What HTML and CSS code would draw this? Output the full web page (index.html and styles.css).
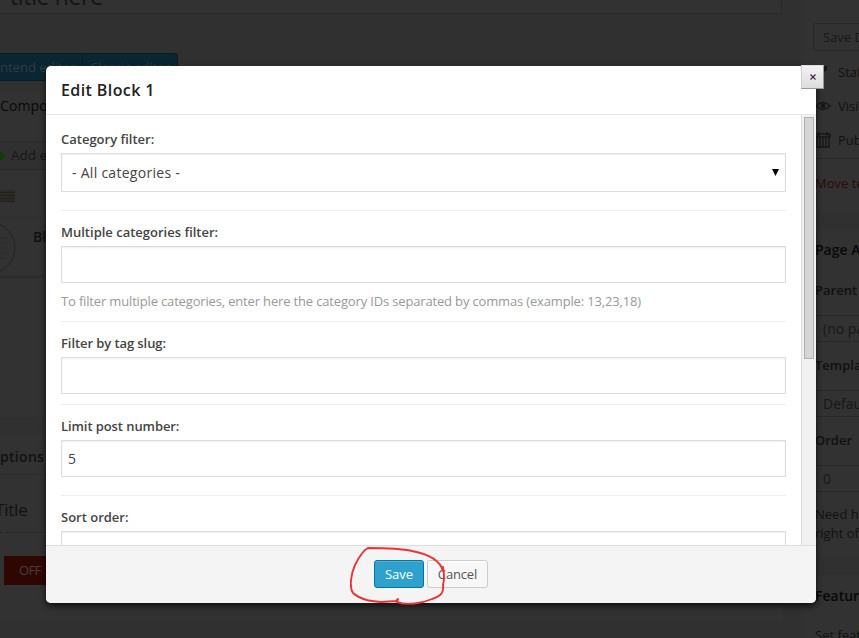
FILE: index.html
```html
<!DOCTYPE html>
<html lang="en">
<head>
<meta charset="utf-8">
<title>Edit Block 1</title>
<link rel="stylesheet" href="styles.css">
</head>
<body>
<div class="page">
  <main class="editor">
    <div class="title-input">title here</div>
    <div class="switcher"><span>ntend editor</span><span class="second">Classic editor</span></div>
    <section class="composer">
      <h3>Compo</h3>
      <div class="toolbar"><svg width="9" height="10" viewBox="0 0 9 10"><path d="M-2 5H5M1 1V9" stroke="#103b09" stroke-width="3"/></svg><span>Add e</span></div>
      <div class="handle"><i></i></div>
      <div class="block"><svg width="33" height="56" viewBox="0 0 33 56"><g fill="none" stroke="#242424"><circle cx="-10" cy="28" r="25"/><path d="M0 18h8M0 23h10M0 28h7M0 33h9M0 38h6" stroke="#292929"/></g></svg><b>Bl</b></div>
      <div class="canvas"></div>
    </section>
    <section class="options">
      <h3>ptions</h3>
      <div class="option-title">Title</div>
      <div class="off">OFF</div>
    </section>
  </main>
  <aside class="side">
    <section class="publish">
      <div class="draft">Save D</div>
      <div class="meta"><svg width="15" height="16" viewBox="0 0 15 16"><path d="M3 2h8v4l-3 2-5 6z" fill="#171717"/></svg>Stat</div>
      <div class="meta"><svg width="15" height="16" viewBox="0 0 15 16"><path d="M0 8Q7 1 14 8Q7 15 0 8Z" fill="none" stroke="#171717" stroke-width="1.2"/><circle cx="7" cy="8" r="2.4" fill="#171717"/></svg>Visi</div>
      <div class="meta"><svg width="15" height="16" viewBox="0 0 15 16"><path d="M0 2h14v3H0zM3 0v4M11 0v4M1 5v10h12V5M4 6v9M7 6v9M10 6v9" fill="none" stroke="#171717" stroke-width="1.4"/></svg>Pub</div>
      <div class="trash">Move to</div>
    </section>
    <section class="attributes">
      <h3>Page A</h3>
      <label class="l-parent">Parent</label>
      <div class="control">(no pa</div>
      <label class="l-template">Templa</label>
      <div class="control">Defau</div>
      <label class="l-order">Order</label>
      <div class="control">0</div>
      <p>Need h<br>right of</p>
    </section>
    <section class="featured">
      <h3>Featur</h3>
      <p>Set feat</p>
    </section>
  </aside>
</div>

<div class="modal">
  <header><h2>Edit Block 1</h2></header>
  <div class="body">
    <form>
      <div class="field f1"><label>Category filter:</label><div class="select"><span>- All categories -</span><svg width="7" height="7" viewBox="0 0 7 7"><path d="M0 0H7L3.5 7Z" fill="#000"/></svg></div></div>
      <div class="field f2"><label>Multiple categories filter:</label><div class="input"></div><small>To filter multiple categories, enter here the category IDs separated by commas (example: 13,23,18)</small></div>
      <div class="field f3"><label>Filter by tag slug:</label><div class="input"></div></div>
      <div class="field f4"><label>Limit post number:</label><div class="input">5</div></div>
      <div class="field f5"><label>Sort order:</label><div class="input"></div></div>
    </form>
    <div class="track"><div class="thumb"></div></div>
  </div>
  <footer><div class="btn save">Save</div><div class="btn cancel">Cancel</div></footer>
  <div class="close"><svg width="6" height="6" viewBox="0 0 6 6"><path d="M.5 .5L5.5 5.5M5.5 .5L.5 5.5" stroke="#461a4c" stroke-width="1.1"/></svg></div>
  <svg class="mark" width="98" height="62" viewBox="0 0 98 62"><path d="M93 25C90 14 78 8 62 5C49 2 32 2 18 2C14 4 9 11 5 19C1 28 -1 41 3 47C11 54 20 55 31 56L46 55L48 53L47 56C57 60 73 57 82 53C91 50 94 47 93 39C95 32 94 27 93 21" fill="none" stroke="#ea3338" stroke-width="1.9" stroke-linecap="round" stroke-linejoin="round"/></svg>
</div>
</body>
</html>
```
FILE: styles.css
```css
* { box-sizing: border-box; }
body {
  margin: 0;
  width: 859px;
  height: 638px;
  overflow: hidden;
  position: relative;
  background: #303030;
  font: 13px/19px "Open Sans", sans-serif;
  color: #111;
}
h2, h3, p { margin: 0; }
svg { display: block; flex: none; }
.page { display: flex; height: 638px; overflow: hidden; white-space: nowrap; }
.editor { width: 782px; flex: none; }
.title-input {
  display: flex;
  align-items: flex-end;
  height: 14px;
  padding: 0 0 1px 10px;
  overflow: hidden;
  line-height: 32px;
  font-size: 23px;
  letter-spacing: -.35px;
  color: #141414;
  background: #323232;
  border: solid #292929;
  border-width: 0 1px 1px 0;
}
.switcher {
  display: flex;
  width: 178px;
  height: 28px;
  margin-top: 39px;
  line-height: 27px;
  background: #0a2633;
  border: 1px solid #071d27;
  border-left: 0;
  border-radius: 0 3px 3px 0;
  color: #343b3e;
}
.switcher span { width: 82px; }
.switcher .second { width: 95px; padding-left: 7px; border-left: 1px solid #071d27; }
.composer { margin-top: 10px; height: 326px; background: #323232; }
h3 { font-size: 14px; font-weight: 600; color: #080808; }
.composer h3 { height: 51px; padding-top: 5px; line-height: 20px; font-weight: 400; letter-spacing: .1px; border-bottom: 1px solid #2b2b2b; }
.toolbar { display: flex; align-items: center; height: 28px; border-bottom: 1px solid #292929; font-size: 13.5px; color: #171717; background: #303030; }
.toolbar span { margin-left: 2px; }
.handle { height: 47px; padding-top: 20px; }
.handle i { display: block; width: 15px; height: 12px; background: repeating-linear-gradient(#2b2a24 0 2px, #22211c 2px 3px); }
.block { display: flex; height: 61px; padding-top: 2px; border: solid #2e2e2e; border-width: 1px 0 3px; font-size: 14px; }
.block b { padding-top: 7px; font-weight: 600; }
.options { margin-top: 19px; height: 200px; background: #323232; height: 184px; }
.options h3 { height: 39px; padding-top: 11px; line-height: 20px; letter-spacing: .3px; border-bottom: 1px solid #2d2d2d; color: #111; }
.option-title { height: 58px; padding-top: 22px; font-size: 17px; line-height: 26px; letter-spacing: -.2px; border-bottom: 1px dashed #272727; margin-left: -5px; }
.off { width: 60px; height: 29px; margin: 23px 0 0 4px; padding-left: 15px; line-height: 28px; letter-spacing: -.6px; color: #4e3b39; background: #2e0703; }
.side { width: 56px; margin-left: 21px; flex: none; overflow: hidden; }
.publish { height: 211px; padding: 23px 0 0 10px; background: #323232; }
.draft { height: 28px; padding-left: 9px; line-height: 26px; border: 1px solid #292929; border-right: 0; border-radius: 3px 0 0 3px; color: #171717; margin-bottom: 4px; }
.meta { display: flex; align-items: center; gap: 7px; height: 34px; padding-left: 3px; }
.trash { margin: 1px 0 0 -10px; padding: 15px 0 0 12px; border-top: 1px solid #292929; color: #2b0b0b; }
.attributes { margin-top: 19px; height: 326px; padding: 10px 0 0 12px; background: #323232; }
.attributes label { display: block; font-weight: 600; }
.attributes .l-parent { height: 34px; margin-top: 22px; }
.attributes .l-template, .attributes .l-order { height: 34px; margin-top: 14px; }
.control { height: 27px; padding-left: 7px; line-height: 25px; border: 1px solid #292929; border-right: 0; font-size: 14px; color: #171717; }
.attributes p { padding-top: 13px; }
.featured { margin-top: 19px; padding: 11px 0 0 12px; background: #323232; height: 70px; }
.featured p { padding-top: 21px; }

.modal {
  position: absolute;
  left: 46px;
  top: 66px;
  width: 770px;
  height: 537px;
  background: #fff;
  border-radius: 5px;
  box-shadow: 0 3px 6px rgba(0, 0, 0, .7);
}
.modal header { height: 49px; padding: 12px 15px; border-bottom: 1px solid #e8e8e8; }
.modal h2 { font-size: 16px; line-height: 24px; font-weight: 600; letter-spacing: .4px; color: #222; }
.body { display: flex; height: 430px; overflow: hidden; }
form { width: 755px; padding: 0 15px; }
.field { border-bottom: 1px solid #eee; padding-top: 15px; color: #444; }
.field label { display: block; height: 23px; font-weight: 600; }
.f1 { height: 96px; }
.f2 { height: 111px; padding-top: 12px; }
.f3, .f4, .f5 { padding-top: 12px; }
.f3 { height: 83px; }
.f3 label, .f4 label { letter-spacing: -.08px; }
.f4 { height: 91px; }
.input { height: 37px; padding: 0 6px; border: 1px solid #ddd; line-height: 36px; font-size: 14px; box-shadow: inset 0 1px 2px rgba(0, 0, 0, .07); }
.select { display: flex; justify-content: space-between; align-items: center; height: 39px; padding: 0 6px 0 10px; border: 1px solid #ddd; font-size: 14px; letter-spacing: .28px; box-shadow: inset 0 1px 2px rgba(0, 0, 0, .07); }
.field small { display: block; padding-top: 9px; font-size: 13px; letter-spacing: -.16px; color: #999; white-space: nowrap; }
.track { width: 15px; padding: 2px 2px 0 0; background: #f1f1f1; border-left: 1px solid #dcdcdc; }
.thumb { height: 242px; width: 10px; margin-left: 2px; background: #d5d5d5; border: 1px solid #b0b0b0; }
.modal footer { display: flex; justify-content: center; gap: 3px; height: 58px; padding-top: 14px; background: #f4f4f4; border-top: 1px solid #ddd; border-radius: 0 0 5px 5px; }
.btn { width: 50px; height: 28px; text-align: center; border: 1px solid #ccc; border-radius: 3px; line-height: 26px; color: #555; background: #f7f7f7; box-shadow: inset 0 1px 0 #fff; }
.cancel { width: 61px; letter-spacing: -.15px; }
.save { color: #fff; background: #2ea2cc; border-color: #0074a2; box-shadow: inset 0 1px 0 rgba(120, 200, 230, .5); }
.close { position: absolute; left: 755px; top: -1px; width: 23px; height: 24px; display: flex; align-items: center; justify-content: center; border: 1px solid #999; border-top-color: #ddd; border-left-color: #ccc; background: linear-gradient(#f2f2f2, #ddd); }
.mark { position: absolute; left: 304px; top: 480px; }
```
